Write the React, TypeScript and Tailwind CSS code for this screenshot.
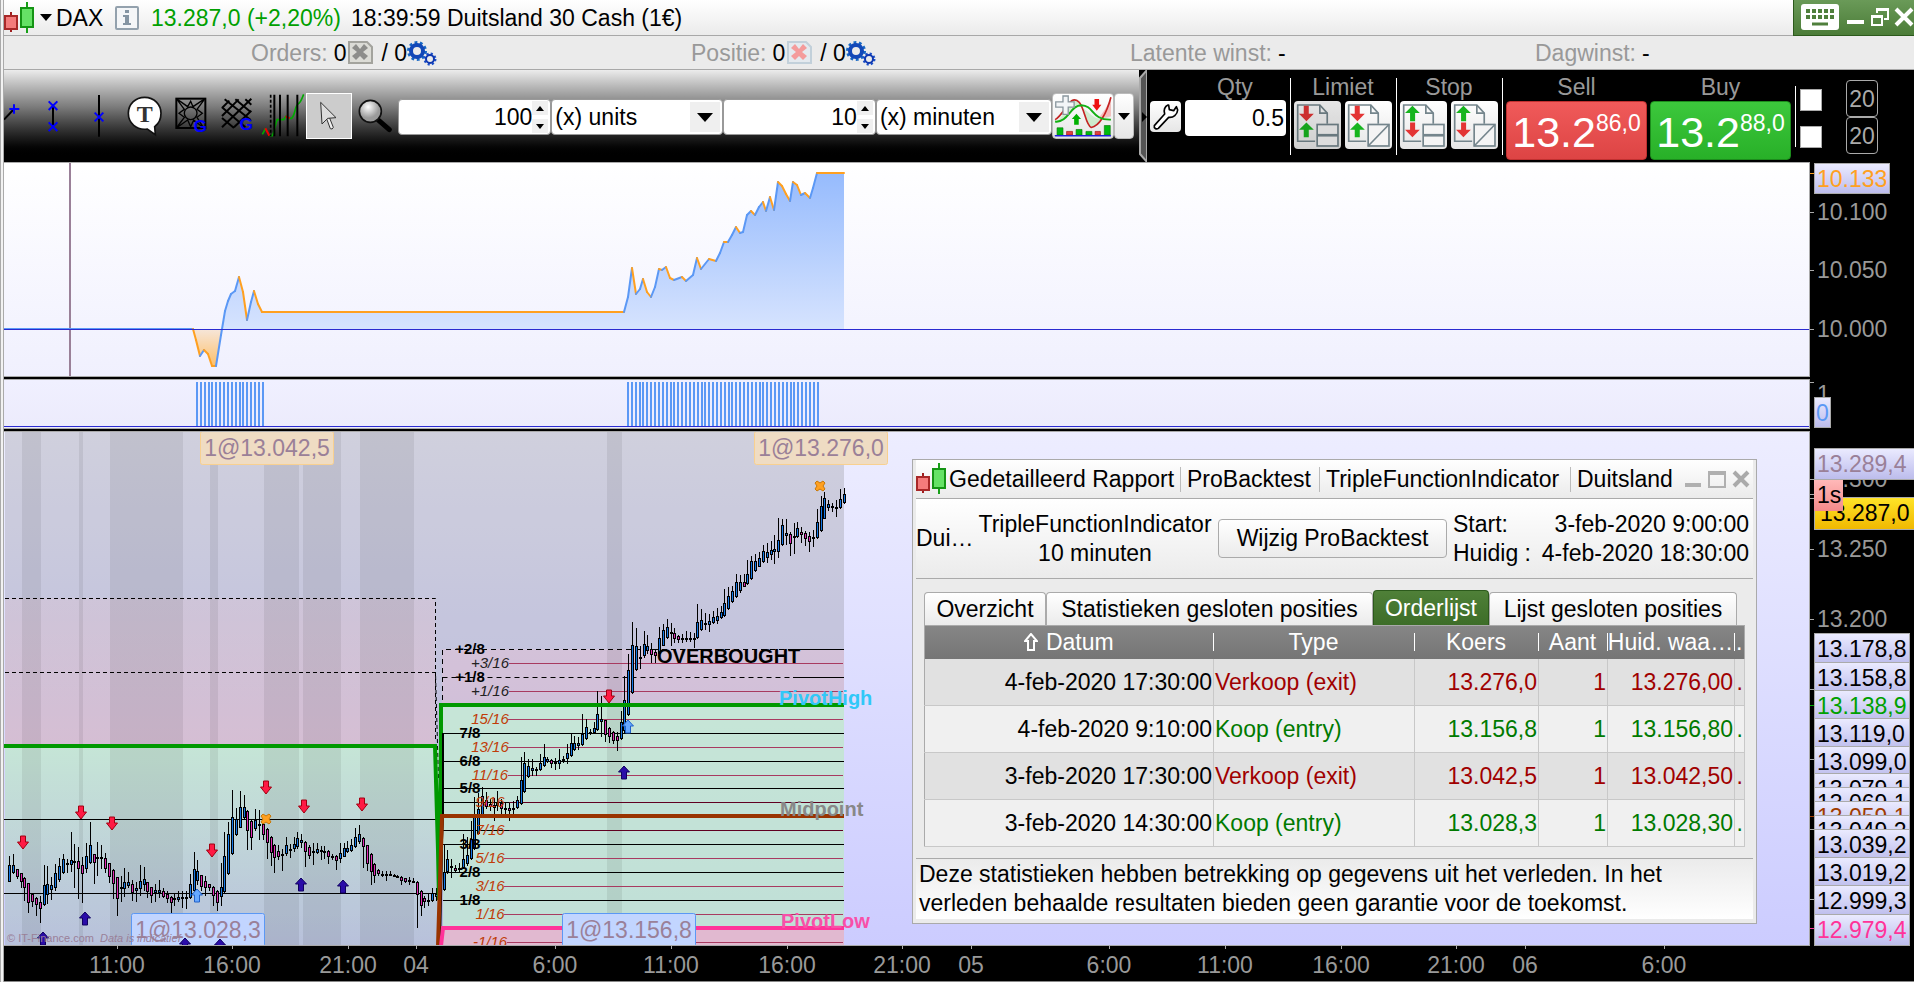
import type { ReactNode } from 'react';

/* ---------- data ---------- */

const EQUITY: [number, number][] = [
  [193, 329], [196, 340], [200, 356], [204, 350], [208, 354], [212, 366], [216, 366], [221, 335],
  [225, 311], [228, 301], [231, 294], [235, 291], [239, 277], [243, 292], [247, 320], [251, 302],
  [254, 291], [258, 304], [262, 312], [624, 312], [628, 297], [632, 268], [636, 294], [640, 289],
  [643, 279], [647, 292], [651, 297], [655, 287], [659, 269], [662, 270], [666, 267], [670, 278],
  [674, 280], [682, 277], [686, 281], [693, 275], [697, 258], [701, 269], [709, 259], [716, 261],
  [720, 253], [724, 242], [728, 242], [732, 235], [736, 227], [740, 233], [743, 232], [747, 215],
  [751, 211], [755, 215], [759, 207], [763, 202], [766, 211], [770, 197], [774, 210], [778, 182],
  [782, 186], [786, 194], [790, 201], [793, 182], [797, 185], [801, 195], [805, 193], [810, 198],
  [813, 188], [817, 173], [844, 173],
];

// high, body top, body bottom, low, rising
const CANDLES: number[][] = [
  [1210, 1235, 1285, 1285, 1], [1205, 1237, 1259, 1262, 1], [1247, 1247, 1270, 1275, 0], [1259, 1259, 1283, 1300, 0],
  [1270, 1273, 1302, 1337, 0], [1287, 1288, 1343, 1373, 0], [1316, 1317, 1340, 1355, 0], [1328, 1329, 1350, 1382, 0],
  [1325, 1341, 1360, 1400, 0], [1237, 1293, 1350, 1352, 1], [1238, 1290, 1322, 1347, 1], [1270, 1293, 1308, 1335, 1],
  [1234, 1259, 1300, 1310, 1], [1216, 1239, 1279, 1283, 1], [1204, 1219, 1259, 1261, 1], [1218, 1231, 1237, 1259, 1],
  [1141, 1221, 1236, 1257, 1], [1175, 1224, 1228, 1300, 0], [1185, 1225, 1246, 1333, 0], [1213, 1237, 1262, 1343, 0],
  [1173, 1210, 1248, 1258, 1], [1115, 1180, 1230, 1233, 1], [1204, 1204, 1230, 1290, 0], [1170, 1214, 1219, 1268, 1],
  [1178, 1214, 1218, 1246, 0], [1202, 1216, 1246, 1258, 0], [1230, 1231, 1270, 1287, 0], [1247, 1249, 1290, 1333, 0],
  [1270, 1271, 1333, 1382, 0], [1268, 1299, 1303, 1341, 0], [1244, 1285, 1303, 1328, 1], [1257, 1284, 1296, 1302, 1],
  [1279, 1289, 1314, 1338, 0], [1285, 1302, 1310, 1340, 1], [1236, 1282, 1303, 1324, 1], [1241, 1275, 1293, 1309, 1],
  [1284, 1285, 1312, 1330, 0], [1298, 1299, 1325, 1343, 0], [1290, 1308, 1314, 1342, 1], [1279, 1306, 1316, 1330, 1],
  [1300, 1310, 1328, 1330, 0], [1311, 1318, 1332, 1344, 0], [1324, 1326, 1344, 1371, 0], [1316, 1330, 1334, 1353, 0],
  [1310, 1326, 1334, 1340, 1], [1311, 1328, 1332, 1358, 0], [1309, 1328, 1331, 1360, 0], [1262, 1291, 1330, 1332, 1],
  [1199, 1247, 1310, 1312, 1], [1221, 1254, 1280, 1292, 1], [1265, 1265, 1298, 1310, 0], [1268, 1281, 1300, 1325, 0],
  [1290, 1291, 1302, 1310, 0], [1295, 1297, 1325, 1352, 0], [1308, 1311, 1344, 1366, 0], [1230, 1299, 1328, 1352, 1],
  [1142, 1211, 1312, 1314, 1], [1115, 1147, 1262, 1264, 1], [1023, 1100, 1205, 1207, 1], [1075, 1105, 1150, 1153, 1],
  [1025, 1070, 1130, 1132, 1], [1037, 1070, 1101, 1105, 1], [1080, 1082, 1140, 1192, 0], [1105, 1112, 1158, 1192, 0],
  [1077, 1107, 1133, 1138, 1], [1080, 1118, 1122, 1165, 0], [1112, 1120, 1150, 1165, 0], [1130, 1134, 1174, 1218, 0],
  [1153, 1155, 1203, 1240, 0], [1177, 1178, 1216, 1258, 0], [1180, 1195, 1213, 1222, 0], [1190, 1205, 1209, 1252, 1],
  [1157, 1178, 1205, 1210, 1], [1176, 1190, 1193, 1215, 0], [1155, 1177, 1191, 1198, 1], [1142, 1160, 1185, 1190, 1],
  [1148, 1165, 1172, 1187, 1], [1168, 1170, 1200, 1241, 0], [1180, 1185, 1210, 1220, 0], [1173, 1195, 1203, 1235, 1],
  [1173, 1190, 1201, 1204, 1], [1182, 1193, 1197, 1222, 0], [1182, 1195, 1203, 1220, 0], [1192, 1195, 1213, 1232, 0],
  [1205, 1211, 1215, 1223, 0], [1208, 1210, 1225, 1250, 0], [1173, 1202, 1219, 1230, 1], [1172, 1187, 1212, 1214, 1],
  [1168, 1187, 1200, 1203, 1], [1163, 1180, 1197, 1200, 1], [1132, 1157, 1185, 1188, 1], [1122, 1147, 1171, 1175, 1],
  [1157, 1160, 1185, 1243, 0], [1178, 1180, 1233, 1252, 0], [1203, 1205, 1255, 1294, 0], [1230, 1232, 1266, 1286, 0],
  [1247, 1250, 1262, 1268, 0], [1252, 1260, 1264, 1270, 0], [1253, 1260, 1265, 1282, 0], [1253, 1260, 1264, 1268, 1],
  [1260, 1263, 1268, 1270, 0], [1263, 1266, 1270, 1273, 0], [1268, 1270, 1280, 1293, 0], [1272, 1274, 1285, 1288, 0],
  [1270, 1278, 1285, 1292, 0], [1273, 1280, 1284, 1288, 1], [1281, 1283, 1322, 1416, 0], [1307, 1309, 1352, 1380, 0],
  [1323, 1329, 1342, 1358, 0], [1316, 1334, 1338, 1353, 1], [1301, 1316, 1338, 1340, 1], [1301, 1318, 1327, 1338, 1],
  [1280, 1290, 1320, 1345, 1], [1180, 1257, 1308, 1310, 1], [1193, 1219, 1257, 1260, 1], [1220, 1240, 1245, 1272, 0],
  [1235, 1243, 1252, 1258, 0], [1230, 1245, 1248, 1256, 0], [1148, 1218, 1243, 1248, 1], [1155, 1207, 1232, 1238, 1],
  [1110, 1162, 1219, 1222, 1], [1042, 1100, 1190, 1192, 1], [1030, 1078, 1147, 1150, 1], [1015, 1040, 1095, 1100, 1],
  [1028, 1050, 1070, 1078, 0], [1048, 1063, 1070, 1082, 0], [1045, 1066, 1075, 1110, 0], [1025, 1060, 1068, 1083, 1],
  [1048, 1060, 1077, 1100, 0], [1060, 1074, 1080, 1092, 0], [1060, 1073, 1081, 1110, 0], [1055, 1075, 1079, 1092, 0],
  [1040, 1052, 1075, 1077, 1], [930, 995, 1063, 1065, 1], [915, 947, 1029, 1030, 1], [935, 955, 987, 990, 1],
  [935, 960, 968, 982, 1], [957, 963, 968, 982, 0], [920, 947, 967, 970, 1], [893, 930, 955, 958, 1],
  [930, 934, 943, 947, 1], [935, 938, 950, 960, 0], [933, 943, 950, 966, 0], [907, 937, 948, 962, 1],
  [925, 934, 940, 945, 1], [892, 918, 936, 950, 1], [865, 890, 927, 928, 1], [868, 888, 908, 912, 1],
  [873, 890, 898, 908, 1], [808, 863, 896, 898, 1], [822, 845, 877, 880, 1], [850, 857, 861, 866, 0],
  [830, 846, 860, 865, 1], [742, 808, 853, 855, 1], [757, 822, 830, 872, 1], [824, 825, 867, 885, 0],
  [845, 848, 872, 890, 0], [855, 857, 883, 892, 0], [858, 870, 884, 913, 0], [798, 830, 877, 880, 1],
  [700, 768, 855, 865, 1], [635, 683, 810, 812, 1], [545, 612, 747, 750, 1], [562, 615, 681, 685, 1],
  [613, 645, 650, 678, 1], [570, 607, 642, 648, 1], [582, 615, 627, 635, 1], [606, 622, 640, 662, 0],
  [622, 630, 642, 662, 0], [560, 592, 635, 637, 1], [550, 568, 613, 615, 1], [537, 560, 592, 594, 1],
  [548, 574, 580, 615, 0], [563, 577, 593, 605, 0], [582, 584, 597, 605, 0], [580, 591, 595, 605, 0],
  [570, 590, 594, 602, 0], [573, 590, 594, 602, 0], [577, 590, 594, 618, 0], [494, 545, 592, 594, 1],
  [508, 540, 569, 571, 1], [520, 548, 554, 567, 1], [522, 543, 553, 575, 1], [515, 531, 548, 552, 1],
  [507, 527, 543, 550, 1], [500, 517, 535, 538, 1], [453, 491, 527, 530, 1], [445, 473, 509, 512, 1],
  [442, 458, 489, 491, 1], [410, 432, 474, 476, 1], [412, 433, 457, 462, 1], [408, 433, 445, 447, 0],
  [370, 408, 438, 441, 1], [358, 373, 424, 426, 1], [352, 373, 400, 402, 1], [348, 364, 388, 390, 1],
  [327, 345, 375, 377, 1], [320, 347, 363, 377, 1], [315, 342, 354, 368, 1], [297, 338, 348, 382, 1],
  [250, 312, 346, 365, 1], [252, 270, 328, 330, 1], [253, 293, 300, 327, 1], [290, 296, 323, 357, 0],
  [265, 300, 308, 352, 1], [262, 277, 305, 308, 1], [275, 290, 297, 322, 0], [288, 293, 310, 330, 0],
  [290, 302, 317, 347, 0], [283, 305, 309, 332, 0], [225, 262, 308, 310, 1], [188, 217, 286, 290, 1],
  [177, 194, 252, 254, 1], [200, 210, 223, 230, 1], [208, 217, 223, 232, 0], [200, 218, 222, 248, 0],
  [168, 196, 222, 224, 1], [165, 183, 208, 210, 1],
];

const toX = (i: number) => Math.round(9 + i * 3.846) + 0.5;
const toY = (v: number) => 430 + Math.round(v * 0.352);

const BANDS = [[22, 19], [79, 4], [110, 73], [210, 8], [264, 35], [303, 38], [360, 54], [607, 15]];
const EIGHTHS: [string, number][] = [
  ['+2/8', 649], ['+1/8', 677], ['7/8', 733], ['6/8', 761], ['5/8', 788], ['3/8', 844], ['2/8', 872], ['1/8', 900],
];
const SIXTEENTHS: [string, number, number][] = [
  ['+3/16', 663, 509], ['+1/16', 691, 509], ['15/16', 719, 508], ['13/16', 747, 508], ['11/16', 775, 508], ['9/16', 802, 504],
  ['7/16', 830, 504], ['5/16', 858, 504], ['3/16', 886, 504], ['1/16', 914, 504], ['-1/16', 942, 507],
];
const SELL_MARKS = [[23, 836], [81, 806], [112, 817], [212, 844], [266, 781], [304, 800], [362, 798], [609, 690]];
const BUY_MARKS = [[43, 932], [85, 912], [185, 938], [220, 939], [301, 878], [343, 880], [624, 766]];
const TIMES: [string, number][] = [
  ['11:00', 117], ['16:00', 232], ['21:00', 348], ['04', 416], ['6:00', 555], ['11:00', 671], ['16:00', 787], ['21:00', 902],
  ['05', 971], ['6:00', 1109], ['11:00', 1225], ['16:00', 1341], ['21:00', 1456], ['06', 1525], ['6:00', 1664],
];
const LEVELS: [string, number, string][] = [
  ['13.178,8', 633, '#000'], ['13.158,8', 662, '#000'], ['13.138,9', 690, '#00a000'], ['13.119,0', 718, '#000'],
  ['13.099,0', 746, '#000'], ['13.079,1', 773, '#000'], ['13.069,1', 787, '#000'], ['13.059,1', 801, '#a03c00'],
  ['13.049,2', 815, '#000'], ['13.039,2', 829, '#000'], ['13.019,2', 857, '#000'], ['12.999,3', 885, '#000'],
  ['12.979,4', 914, '#ff3399'],
];

const ORDERS = [
  { date: '4-feb-2020 17:30:00', type: 'Verkoop (exit)', price: '13.276,0', qty: 1, value: '13.276,00', buy: false },
  { date: '4-feb-2020 9:10:00', type: 'Koop (entry)', price: '13.156,8', qty: 1, value: '13.156,80', buy: true },
  { date: '3-feb-2020 17:30:00', type: 'Verkoop (exit)', price: '13.042,5', qty: 1, value: '13.042,50', buy: false },
  { date: '3-feb-2020 14:30:00', type: 'Koop (entry)', price: '13.028,3', qty: 1, value: '13.028,30', buy: true },
];

/* ---------- icons ---------- */

const CandleLogo = () => (
  <svg width="30" height="32" viewBox="0 0 30 32" className="shrink-0">
    <path d="M7 10v20" stroke="#a02020" strokeWidth="2" />
    <rect x="1" y="14" width="12" height="13" fill="#f47c7c" stroke="#a82828" strokeWidth="2" />
    <path d="M23 0v31" stroke="#18a018" strokeWidth="2" />
    <rect x="17" y="6" width="12" height="19" fill="#66e266" stroke="#159515" strokeWidth="2" />
  </svg>
);

const Caret = ({ w = 16, h = 9 }: { w?: number; h?: number }) => (
  <svg width={w} height={h} viewBox="0 0 16 9" preserveAspectRatio="none">
    <path d="M0 0h16l-8 9z" fill="#000" />
  </svg>
);

const InfoIcon = () => (
  <svg width="24" height="24" viewBox="0 0 24 24" className="shrink-0">
    <rect x="1" y="1" width="22" height="22" rx="1" fill="#f4f6f8" stroke="#93a1ad" strokeWidth="2" />
    <path d="M10 4h4v3h-4zM8 9h6v8h2v2H8v-2h2v-6H8z" fill="#8595a3" />
  </svg>
);

const CloseSheet = ({ muted }: { muted?: boolean }) => (
  <svg width="25" height="23" viewBox="0 0 25 23">
    <path d="M1 1h18l5 5v16H1z" fill={muted ? '#dcdcd6' : '#e4e9ee'} stroke={muted ? '#a3a39d' : '#c2d0da'} strokeWidth="2" />
    <path d="M4 7l4-4 4 5 4-5 4 4-5 4 5 4-4 4-4-4-4 4-4-4 5-4z" fill={muted ? '#8d8d8a' : '#f49b9b'} />
  </svg>
);

const Gears = () => (
  <svg width="30" height="26" viewBox="0 0 30 26" fill="none">
    <circle cx="10" cy="11" r="8" stroke="#1868c4" strokeWidth="4" strokeDasharray="2.600 2.427" />
    <circle cx="10" cy="11" r="6" stroke="#1248b8" strokeWidth="4" />
    <circle cx="23" cy="19" r="5" stroke="#1a50c8" strokeWidth="3" strokeDasharray="2 1.927" />
    <circle cx="23" cy="19" r="4" stroke="#1038b0" strokeWidth="2" />
  </svg>
);

const LineTool = () => (
  <svg width="16" height="46" viewBox="12 27 48 138">
    <path d="M12 107L42 75" stroke="#000" strokeWidth="6" />
    <path d="M42 61v28M28 75h30" stroke="#00f" strokeWidth="6" />
  </svg>
);

const SegmentTool = () => (
  <svg width="12" height="46" viewBox="141 27 36 138">
    <path d="M159 66v62" stroke="#000" strokeWidth="6" />
    <path d="M146 52l26 26M172 52l-26 26M146 115l26 26M172 115l-26 26" stroke="#00f" strokeWidth="6" />
  </svg>
);

const VerticalTool = () => (
  <svg width="12" height="46" viewBox="279 27 36 138">
    <path d="M297 33v125" stroke="#000" strokeWidth="6" />
    <path d="M284 86l26 26M310 86l-26 26" stroke="#00f" strokeWidth="6" />
  </svg>
);

const TextTool = () => (
  <svg width="38" height="42" viewBox="376 38 114 126">
    <path d="M432 45c29 0 49 22 49 48 0 18-8 32-19 40l2 24-24-17c-33 5-57-18-57-47 0-27 21-48 49-48z" fill="#fff" stroke="#111" strokeWidth="5" />
    <text x="432" y="118" textAnchor="middle" fontFamily="Liberation Serif" fontWeight="bold" fontSize="72" fill="#333">T</text>
  </svg>
);

const GannFanTool = () => (
  <svg width="34" height="40" viewBox="520 44 102 120" fill="none">
    <rect x="527" y="52" width="87" height="88" stroke="#000" strokeWidth="6" />
    <circle cx="570" cy="96" r="19" stroke="#000" strokeWidth="4" />
    <path d="M527 52l24 32-16 12 16 12-24 32 34-24 9 20 9-20 30 24-20-32 16-12-16-12 24-32-36 24-7-16-9 16z" stroke="#000" strokeWidth="4" />
    <text x="599" y="151" textAnchor="middle" fontWeight="bold" fontSize="52" fill="#00f">G</text>
  </svg>
);

const GannGridTool = () => (
  <svg width="34" height="40" viewBox="658 44 102 120" fill="none">
    <path d="M672 54l78 62M664 78l70 60M664 110l36 30M704 54l46 38M734 54l18 16M664 138l88-86M664 104l50-50M664 80l22-22M700 138l52-50" stroke="#000" strokeWidth="6" />
    <text x="737" y="146" textAnchor="middle" fontWeight="bold" fontSize="52" fill="#00f">G</text>
  </svg>
);

const CyclesTool = () => (
  <svg width="44" height="46" viewBox="780 28 132 138" fill="none">
    <path d="M784 152l10-18M806 156h8c6-10 8-30 14-48h20l8-12M864 104h8c12-12 8-34 20-44 8-4 10-14 16-28" stroke="#0a0" strokeWidth="5" />
    <path d="M793 134l12 22M854 98l12 6" stroke="#e00" strokeWidth="6" />
    <path d="M809 33v125" stroke="#000" strokeWidth="5" strokeDasharray="9 6" />
    <path d="M820 33v125M837 33v125M860 33v125M889 33v125" stroke="#000" strokeWidth="6" />
  </svg>
);

const PointerTool = () => (
  <svg width="24" height="32" viewBox="954 50 66 96">
    <path d="M979 104l12 32q6 4 9-4l-12-30z" fill="#eee" stroke="#333" strokeWidth="3" />
    <path d="M962 57l46 46-25 2-17 17z" fill="#ddd" stroke="#333" strokeWidth="3" />
  </svg>
);

const Magnifier = () => (
  <svg width="34" height="36" viewBox="1068 46 102 106">
    <defs>
      <radialGradient id="lens" cx=".4" cy=".3">
        <stop offset="0" stopColor="#fff" />
        <stop offset="1" stopColor="#9a9a9a" />
      </radialGradient>
    </defs>
    <path d="M1130 112l32 28" stroke="#000" strokeWidth="15" strokeLinecap="round" />
    <circle cx="1105" cy="85" r="33" fill="url(#lens)" stroke="#111" strokeWidth="5" />
  </svg>
);

const IndicatorIcon = () => (
  <svg width="60" height="44" viewBox="42 72 178 134" fill="none">
    <path d="M46 158c40-20 44-96 74-62 16 20 20 70 36 76 24 4 46-40 60-90v58c-30 12-40 10-60-4-30-30-50-40-72-4-12 18-24 30-38 26z" fill="#bfe8bf" opacity=".7" />
    <path d="M176 146c16-14 30-38 40-64v58z" fill="#f4bcbc" />
    <path d="M46 150c30-16 46-84 74-52 16 20 20 70 36 76 24-4 46-40 60-92" stroke="#c42222" strokeWidth="5" />
    <path d="M46 156c40 4 46-50 80-50 40 2 30 46 90 44" stroke="#12b012" strokeWidth="6" />
    <path d="M70 78h16v18h18v16H86v22H70v-22H48V96h22z" fill="#f3f5f7" stroke="#8a979e" strokeWidth="4" />
    <path d="M166 87h14v18h7l-14 18-14-18h7z" fill="#ee1111" />
    <path d="M104 166h14v-18h7l-14-16-14 16h7z" fill="#00b000" />
    <path d="M52 175h18v22H52zM110 180h18v17h-18zM140 186h18v11h-18zM196 168h18v29h-18z" fill="#00bb10" stroke="#0a7a0a" strokeWidth="2" />
    <path d="M81 186h18v11H81zM168 186h16v11h-16z" fill="#e04040" stroke="#a01010" strokeWidth="2" />
    <path d="M45 199h171" stroke="#2222dd" strokeWidth="5" />
  </svg>
);

const Wrench = () => (
  <svg width="30" height="30" viewBox="335 92 90 90">
    <path d="M386 101c-10 4-14 16-10 27l-31 35c-2 8 6 12 12 8l31-33c14 2 26-8 27-22l-4-10-8 12-13-3-2-14z" fill="#fff" stroke="#000" strokeWidth="5" strokeLinejoin="round" />
  </svg>
);

const OrderIcon = ({ stop, diagonal }: { stop?: boolean; diagonal?: boolean }) => (
  <svg width="47" height="47" viewBox="763 95 140 140" fill="none" className="shrink-0">
    <path d="M826 212h-52v-108h66l22 24v32" stroke="#74858c" strokeWidth="5" />
    <path d="M840 104v24h22" stroke="#74858c" strokeWidth="5" />
    <path d="M792 106h15v24h15l-22 22-22-22h14z" fill={stop ? '#17b51f' : '#e33434'} transform={stop ? 'rotate(180 800 129)' : undefined} />
    <path d="M792 200h15v-22h15l-22-22-22 22h14z" fill={stop ? '#e33434' : '#17b51f'} transform={stop ? 'rotate(180 800 178)' : undefined} />
    <rect x="832" y="162" width="62" height="64" fill="#f4f4f4" stroke="#74858c" strokeWidth="5" />
    {diagonal ? (
      <path d="M832 226l62-64" stroke="#74858c" strokeWidth="5" />
    ) : (
      <path d="M832 194h62" stroke="#74858c" strokeWidth="8" />
    )}
  </svg>
);

/* ---------- header ---------- */

const TitleBar = () => (
  <header className="flex h-9 items-center border-b border-[#a8a8a8] bg-linear-to-b from-white to-[#ebebeb]">
    <CandleLogo />
    <button aria-label="Instrument" className="ml-1 flex h-8 w-4 items-center justify-center">
      <Caret w={12} h={7} />
    </button>
    <h1 className="ml-[2px] w-[59px]">DAX</h1>
    <button aria-label="Info" className="w-[36px]"><InfoIcon /></button>
    <span className="w-[200px] whitespace-nowrap text-[#00a000]">13.287,0 (+2,20%)</span>
    <span className="w-[96px]">18:39:59</span>
    <span className="flex-1 whitespace-nowrap">Duitsland 30 Cash (1€)</span>
    <div className="flex h-9 items-center border-b border-l border-[#2c5a1c] bg-linear-to-b from-[#6a9a58] to-[#4b7c38] pl-[6px]">
      <button aria-label="Toetsenbord">
        <svg width="40" height="28" viewBox="0 0 40 28">
          <rect x="1" y="1" width="38" height="26" rx="3" fill="#fff" />
          <path d="M6 8h28M6 14h28" stroke="#4f7f3c" strokeWidth="4" strokeDasharray="4 2" />
          <path d="M12 21h16" stroke="#4f7f3c" strokeWidth="3" />
        </svg>
      </button>
      <button aria-label="Minimaliseren" className="ml-[6px]">
        <svg width="20" height="24"><path d="M1 17h17" stroke="#fff" strokeWidth="4" /></svg>
      </button>
      <button aria-label="Herstellen" className="ml-1">
        <svg width="20" height="24" fill="none" stroke="#fff" strokeWidth="2">
          <path d="M7 8V4h11v10h-4M7 5h11" />
          <path d="M2 11h10v9H2zM2 12h10" />
        </svg>
      </button>
      <button aria-label="Sluiten" className="ml-1">
        <svg width="20" height="24" stroke="#fff" strokeWidth="4"><path d="M2 4l16 16M18 4L2 20" /></svg>
      </button>
    </div>
  </header>
);

const StatusBar = () => (
  <div className="grid h-[34px] grid-cols-[440fr_439fr_405fr_379fr] items-center whitespace-nowrap border-b border-[#a8a8a8] bg-[#ebebeb] pl-[247px]">
    <div className="flex items-center">
      <span className="mr-[6px] text-[#999]">Orders:</span>0
      <button aria-label="Orders annuleren" className="ml-[2px] mr-2"><CloseSheet muted /></button>/ 0
      <button aria-label="Automatische orders"><Gears /></button>
    </div>
    <div className="flex items-center">
      <span className="mr-[6px] text-[#999]">Positie:</span>0
      <button aria-label="Positie sluiten" className="ml-[2px] mr-2"><CloseSheet /></button>/ 0
      <button aria-label="Automatische posities"><Gears /></button>
    </div>
    <div><span className="mr-[6px] text-[#999]">Latente winst:</span>-</div>
    <div><span className="mr-[6px] text-[#999]">Dagwinst:</span>-</div>
  </div>
);

const Spin = ({ label, value, className }: { label: string; value: string; className: string }) => (
  <div className={`flex h-9 items-center rounded-sm border border-[#999] bg-white ${className}`}>
    <input aria-label={label} defaultValue={value} className="h-full w-0 flex-1 bg-transparent text-right outline-none" />
    <div className="mr-[2px] flex w-4 flex-col gap-1">
      <button aria-label={`${label} hoger`} className="flex h-[14px] items-center justify-center bg-[#f0f0f0]">
        <svg width="8" height="5"><path d="M0 5h8L4 0z" /></svg>
      </button>
      <button aria-label={`${label} lager`} className="flex h-[14px] items-center justify-center bg-[#f0f0f0]">
        <svg width="8" height="5"><path d="M0 0h8L4 5z" /></svg>
      </button>
    </div>
  </div>
);

const Choice = ({ label, value, className }: { label: string; value: string; className: string }) => (
  <div className={`grid h-9 items-center rounded-sm border border-[#999] bg-white ${className}`}>
    <select aria-label={label} defaultValue={value} className="col-start-1 row-start-1 h-full w-full appearance-none bg-transparent pl-[3px] outline-none">
      <option>{value}</option>
    </select>
    <span className="pointer-events-none col-start-1 row-start-1 mr-[2px] flex h-[30px] w-[30px] items-center justify-center justify-self-end bg-[#efefef]">
      <Caret />
    </span>
  </div>
);

const Tool = ({ label, active, children }: { label: string; active?: boolean; children: ReactNode }) => (
  <button
    aria-label={label}
    className={`flex h-[46px] w-[46px] shrink-0 items-center justify-center ${active ? 'border border-white bg-[#cccccc]' : ''}`}
  >
    {children}
  </button>
);

const iconButton = 'flex items-center justify-center rounded-sm bg-linear-to-b from-white to-[#e6e6e6]';

const Quote = ({ label, big, small, className }: { label: string; big: string; small: string; className: string }) => (
  <div className="flex w-[141px] flex-col items-center">
    <span className="h-[27px] text-[#999]">{label}</span>
    <button aria-label={label} className={`flex h-[59px] w-full justify-center rounded-sm border bg-linear-to-b text-white ${className}`}>
      <span className="text-[43px] leading-[60px]">{big}</span>
      <span className="text-[23px] leading-[42px]">{small}</span>
    </button>
  </div>
);

const Toolbar = () => (
  <div className="flex h-[92px] bg-black">
    <div className="flex flex-1 items-start bg-linear-to-b from-[#ececec] via-[#7c7c7c] via-40% to-black to-95% pt-[23px]">
      <div className="w-[26px] shrink-0"><LineTool /></div>
      <Tool label="Segment"><SegmentTool /></Tool>
      <Tool label="Verticale lijn"><VerticalTool /></Tool>
      <Tool label="Tekst"><TextTool /></Tool>
      <Tool label="Gann-waaier"><GannFanTool /></Tool>
      <Tool label="Gann-raster"><GannGridTool /></Tool>
      <Tool label="Cycli"><CyclesTool /></Tool>
      <Tool label="Aanwijzer" active><PointerTool /></Tool>
      <Tool label="Zoom"><Magnifier /></Tool>
      <div className="flex flex-1 pt-[6px]">
        <Spin label="Aantal units" value="100" className="flex-[153]" />
        <Choice label="Eenheid" value="(x) units" className="flex-[171]" />
        <Spin label="Aantal minuten" value="10" className="flex-[153]" />
        <Choice label="Tijdsinterval" value="(x) minuten" className="flex-[176]" />
      </div>
      <button aria-label="Indicatoren" className={`${iconButton} h-[46px] w-[62px] border border-[#bbb]`}><IndicatorIcon /></button>
      <button aria-label="Meer indicatoren" className={`${iconButton} mr-[5px] h-[46px] w-5 border border-[#bbb]`}><Caret w={12} h={7} /></button>
    </div>
    <svg width="8" height="92" className="shrink-0">
      <path d="M8 0L1 8v76l7 8z" fill="#555" stroke="#aaa" strokeWidth="2" />
      <path d="M3 42l5 5-5 5z" fill="#000" />
    </svg>
    <div className="flex items-start pl-[3px] pt-1">
      <button aria-label="Instellingen" className={`${iconButton} mt-[27px] h-[31px] w-[31px]`}><Wrench /></button>
      <label className="ml-1 flex w-[101px] flex-col">
        <span className="h-[26px] pl-8 text-[#999]">Qty</span>
        <input defaultValue="0.5" className="h-9 rounded-sm bg-white px-[2px] text-right outline-none" />
      </label>
      <div className="ml-1 mr-[3px] mt-1 h-[77px] w-px bg-white" />
      <div className="flex flex-col items-center">
        <span className="h-[27px] text-[#999]">Limiet</span>
        <div className="flex gap-1">
          <button aria-label="Limiet" className={`${iconButton} h-12 w-[47px] brightness-90`}><OrderIcon /></button>
          <button aria-label="Limiet vrij" className={`${iconButton} h-12 w-[47px]`}><OrderIcon diagonal /></button>
        </div>
      </div>
      <div className="ml-1 mr-[3px] mt-1 h-[77px] w-px bg-white" />
      <div className="flex flex-col items-center">
        <span className="h-[27px] text-[#999]">Stop</span>
        <div className="flex gap-1">
          <button aria-label="Stop" className={`${iconButton} h-12 w-[47px]`}><OrderIcon stop /></button>
          <button aria-label="Stop vrij" className={`${iconButton} h-12 w-[47px]`}><OrderIcon stop diagonal /></button>
        </div>
      </div>
      <div className="ml-1 mr-[3px] mt-1 h-[77px] w-px bg-white" />
      <Quote label="Sell" big="13.2" small="86,0" className="border-[#c03030] from-[#f05a5a] to-[#dd4444]" />
      <div className="w-[3px]" />
      <Quote label="Buy" big="13.2" small="88,0" className="border-[#1c8c1c] from-[#3cc83c] to-[#28b028]" />
      <div className="ml-1 mr-1 mt-3 h-[61px] w-px bg-white" />
      <div className="flex flex-col gap-[15px] pt-[15px]">
        <input type="checkbox" aria-label="Stop meenemen" className="h-[22px] w-[22px] appearance-none border border-[#aaa] bg-white" />
        <input type="checkbox" aria-label="Limiet meenemen" className="h-[22px] w-[22px] appearance-none border border-[#aaa] bg-white" />
      </div>
      <div className="ml-6 mr-9 flex flex-col pt-[6px] text-[#aaa]">
        <button className="h-[37px] w-8 rounded-sm border border-[#aaa]">20</button>
        <button className="h-[37px] w-8 rounded-sm border border-[#aaa]">20</button>
      </div>
    </div>
  </div>
);

/* ---------- charts ---------- */

// Chart geometry is kept in screen units; each pane shifts it to its own origin.
const Pane = ({ x, y, className, children }: { x: number; y: number; className?: string; children: ReactNode }) => (
  <svg className={`block h-full w-full ${className ?? ''}`}>
    <g transform={`translate(${-x} ${-y})`}>{children}</g>
  </svg>
);

const Row = ({ className, plot, axis }: { className: string; plot: ReactNode; axis: ReactNode }) => (
  <section className={`flex bg-black ${className}`}>
    <div className="relative min-w-0 flex-1">{plot}</div>
    <div className="w-[104px] shrink-0">{axis}</div>
  </section>
);

const frame = 'h-full border-y border-r border-[#aaa]';

const Tick = ({ y, text }: { y: number; text?: string }) => (
  <>
    <path d={`M1810 ${y}.5h4`} stroke="#aaa" />
    {text && <text x="1817" y={y + 8} fill="#999">{text}</text>}
  </>
);

const PriceBox = ({ y, w, h = 31, text, color }: { y: number; w: number; h?: number; text: string; color: string }) => (
  <>
    <rect x="1814.5" y={y + 0.5} width={w} height={h} fill="url(#box)" stroke="#aaa" />
    <text x={w < 20 ? 1816 : 1817} y={y + 24} fill={color}>{text}</text>
  </>
);

const BoxGradient = () => (
  <defs>
    <linearGradient id="box" x2="0" y2="1">
      <stop stopColor="#ebebff" />
      <stop offset="1" stopColor="#bcbcec" />
    </linearGradient>
  </defs>
);

const EquityPlot = () => {
  const gain = EQUITY.slice(8).map((p) => p.join(',')).join(' ');
  const loss = EQUITY.slice(0, 8).map((p) => p.join(',')).join(' ');
  return (
    <div className={`${frame} bg-linear-to-b from-white to-[#f0f0fe]`}>
      <Pane x={4} y={163}>
        <defs>
          <linearGradient id="gain" gradientUnits="userSpaceOnUse" x1="0" y1="173" x2="0" y2="329">
            <stop stopColor="#96bbfd" />
            <stop offset="1" stopColor="#d6e3fe" />
          </linearGradient>
          <linearGradient id="loss" x2="0" y2="1">
            <stop stopColor="#f6e6da" />
            <stop offset="1" stopColor="#fdc06a" />
          </linearGradient>
        </defs>
        <path d="M70 163v214" stroke="#9a8098" strokeWidth="2" />
        <polygon points={`222,329 ${gain} 844,329`} fill="url(#gain)" />
        <polygon points={`193,329 ${loss} 222,329`} fill="url(#loss)" />
        <path d="M4 328.5h190" stroke="#5b98f5" />
        {EQUITY.slice(1).map(([x, y], i) => (
          <path
            key={x}
            d={`M${EQUITY[i][0]} ${EQUITY[i][1]}L${x} ${y}`}
            stroke={y < EQUITY[i][1] ? '#5b98f5' : '#ffa020'}
            strokeWidth="2"
            strokeLinecap="round"
          />
        ))}
        <path d="M4 329.5h4000" stroke="#2a2ad0" />
      </Pane>
    </div>
  );
};

const PositionPlot = () => {
  const bars = [
    ...Array.from({ length: 18 }, (_, i) => Math.round(196 + i * 3.87)),
    ...Array.from({ length: 50 }, (_, i) => Math.round(627 + i * 3.87)),
  ];
  return (
    <div className={`${frame} bg-linear-to-b from-[#f0f0ff] to-[#ecebfc]`}>
      <Pane x={4} y={380}>
        {bars.map((x) => <rect key={x} x={x} y="382" width="2" height="44" fill="#5b98f5" />)}
        <path d="M4 426.5h4000" stroke="#2a2ad0" />
      </Pane>
    </div>
  );
};

const PriceTag = ({ x, y, buy, text }: { x: number; y: number; buy?: boolean; text: string }) => (
  <>
    <rect x={x + 0.5} y={y + 0.5} width="133" height="33" rx="2" fill={buy ? '#c2d5ff' : '#efdcc3'} stroke={buy ? '#5b98f5' : '#f8d090'} />
    <text x={x + 67} y={y + 25} textAnchor="middle" fill="#9a8098">{text}</text>
  </>
);

const Cross = ({ x, y }: { x: number; y: number }) => (
  <path
    transform={`translate(${x} ${y})`}
    d="M-5 -3l2-2 3 2 3-2 2 2-2 3 2 3-2 2-3-2-3 2-2-2 2-3z"
    fill="#ffa020" stroke="#c87808"
  />
);

const UP = 'M-2.500 13h5v-7h3l-5.500-6-5.500 6h3z';
const DOWN = 'M-2.500 0h5v6h3l-5.500 7-5.500-7h3z';

const PricePlot = () => (
  <div className={`${frame} bg-linear-to-b from-[#ededff] to-[#ccccff]`}>
    <Pane x={4} y={432}>
      <defs>
        <linearGradient id="green" x2="0" y2="1">
          <stop stopColor="#caffd2" stopOpacity=".6" />
          <stop offset="1" stopColor="#caffd2" stopOpacity=".15" />
        </linearGradient>
        <linearGradient id="pink" x2="0" y2="1">
          <stop stopColor="#ffbdc2" stopOpacity=".15" />
          <stop offset="1" stopColor="#ffbdc2" stopOpacity=".35" />
        </linearGradient>
      </defs>
      <rect x="5" y="432" width="839" height="520" fill="#3a3a2a" opacity=".16" />
      <rect x="5" y="598" width="430" height="148" fill="url(#pink)" />
      <rect x="5" y="746" width="435" height="206" fill="url(#green)" />
      <rect x="442" y="649" width="402" height="56" fill="#ffbdd2" opacity=".28" />
      <rect x="443" y="705" width="401" height="223" fill="#caffd2" opacity=".58" />
      <rect x="443" y="928" width="401" height="24" fill="#ffbdc8" opacity=".6" />
      {BANDS.map(([x, w]) => <rect key={x} x={x} y="432" width={w} height="520" opacity=".07" />)}

      <g fill="none">
        <path d="M5 598.500H435.500V740M5 672.500H435.500L438.500 780" stroke="#000" strokeDasharray="4 3" />
        <path d="M4 819.500H436M4 893.500H436" stroke="#000" />
        <path d="M442.500 700V649.500H800M442.500 677.500H793" stroke="#000" strokeDasharray="5 4" />
        <path d="M800 649.500h44M793 677.500h51" stroke="#000" />
        {EIGHTHS.slice(2).map(([t, y]) => <path key={t} d={`M443 ${y}.5H844`} stroke="#000" />)}
        {SIXTEENTHS.map(([t, y, x]) => (
          <path key={t} d={`M${x} ${y}.5H843`} stroke={t === '9/16' || t === '7/16' ? '#600020' : '#a83a60'} />
        ))}
        <path d="M443 802.500h66M443 830.500h66" stroke="#000" />
      </g>

      {CANDLES.map(([high, top, bottom, low, rising], i) => (
        <g key={i} stroke="#000">
          <path d={`M${toX(i)} ${toY(high)}V${toY(low)}`} />
          <rect
            x={toX(i) - 1}
            y={toY(top) + 0.5}
            width="2"
            height={Math.max(1, toY(bottom) - toY(top) - 1)}
            fill={rising ? '#1478e6' : '#e02ab4'}
          />
        </g>
      ))}

      <g fill="none">
        <path d="M4 746H435L438 850L439 900L441 740V705H844" stroke="#009900" strokeWidth="4" />
        <path d="M439 946V900L443 820V733M440 946L442 850" stroke="#000" strokeWidth="2" />
        <path d="M438 946L442 816H844" stroke="#993300" strokeWidth="4" />
        <path d="M441 946L443 928H844" stroke="#ff3399" strokeWidth="4" />
      </g>

      <g fontSize="15" fontWeight="bold" textAnchor="middle">
        {EIGHTHS.map(([t, y]) => <text key={t} x="470" y={y + 5}>{t}</text>)}
      </g>
      <g fontSize="15" fontStyle="italic" textAnchor="middle">
        {SIXTEENTHS.map(([t, y]) => (
          <text key={t} x="490" y={y + 5} fill={t === '+3/16' || t === '+1/16' ? '#222' : '#c03c08'}>{t}</text>
        ))}
      </g>
      <g fontSize="20" fontWeight="bold">
        <text x="657" y="663">OVERBOUGHT</text>
        <text x="779" y="705" fill="#30c8f8">PivotHigh</text>
        <text x="780" y="816" fill="#888">Midpoint</text>
        <text x="781" y="928" fill="#f850a8">PivotLow</text>
      </g>

      <PriceTag x={200} y={431} text="1@13.042,5" />
      <PriceTag x={754} y={431} text="1@13.276,0" />
      <PriceTag x={131} y={913} buy text="1@13.028,3" />
      <PriceTag x={562} y={913} buy text="1@13.156,8" />

      {SELL_MARKS.map(([x, y]) => (
        <path key={x} transform={`translate(${x} ${y})`} d={DOWN} fill="#ff1a44" stroke="#a00010" />
      ))}
      {BUY_MARKS.map(([x, y]) => (
        <path key={x} transform={`translate(${x} ${y})`} d={UP} fill="#2a0ca8" stroke="#100060" />
      ))}
      <path transform="translate(197 889)" d={UP} fill="#66a8ff" stroke="#2060c8" />
      <path transform="translate(628 720)" d={UP} fill="#66a8ff" stroke="#2060c8" />
      <Cross x={266} y={819} />
      <Cross x={820} y={486} />

      <g fontSize="11" fill="#9a8098">
        <text x="7" y="942">© IT-Finance.com</text>
        <text x="100" y="942" fontStyle="italic">Data is indicatief</text>
      </g>
    </Pane>
  </div>
);

const PriceAxis = () => (
  <Pane x={1810} y={431}>
    <BoxGradient />
    <defs>
      <linearGradient id="last" x2="0" y2="1">
        <stop stopColor="#ffe428" />
        <stop offset="1" stopColor="#f0b800" />
      </linearGradient>
      <linearGradient id="delay" x2="0" y2="1">
        <stop stopColor="#ffb8b8" />
        <stop offset="1" stopColor="#f48a8a" />
      </linearGradient>
    </defs>
    <Tick y={479} text="13.300" />
    <Tick y={549} text="13.250" />
    <Tick y={619} text="13.200" />
    {[494, 498, 689, 759, 829, 899].map((y) => <Tick key={y} y={y} />)}
    <path d="M1810 705.500h4" stroke="#0a0" />
    <path d="M1810 816.500h4" stroke="#a03c00" />
    <path d="M1810 928.500h4" stroke="#f39" />
    <PriceBox y={448} w={120} text="13.289,4" color="#9a8098" />
    <rect x="1814.5" y="497.500" width="120" height="32" fill="url(#last)" stroke="#aaa" />
    <text x="1820" y="521">13.287,0</text>
    <rect x="1814" y="480" width="29" height="31" fill="url(#delay)" />
    <text x="1817" y="503">1s</text>
    {LEVELS.map(([text, y, color]) => <PriceBox key={text} y={y} w={95} text={text} color={color} />)}
  </Pane>
);

const TimeAxis = () => (
  <footer className="h-9 border-b border-[#888] bg-black">
    <Pane x={4} y={946}>
      {TIMES.map(([text, x]) => (
        <g key={x}>
          <path d={`M${x}.5 945v4`} stroke="#aaa" />
          <text x={x} y="973" textAnchor="middle" fill="#999">{text}</text>
        </g>
      ))}
    </Pane>
  </footer>
);

/* ---------- report window ---------- */

const TABS = [
  { label: 'Overzicht', className: 'w-[122px]' },
  { label: 'Statistieken gesloten posities', className: 'w-[327px]' },
  { label: 'Orderlijst', className: 'w-[116px]', active: true },
  { label: 'Lijst gesloten posities', className: 'w-[248px]' },
];

const cell = 'overflow-hidden whitespace-nowrap border-b border-r border-[#c8c8c8] p-0 px-px';

const OrderTable = () => (
  <table className="w-full table-fixed border-collapse border border-[#aaa]">
    <colgroup>
      <col className="w-[289px]" />
      <col />
      <col className="w-[124px]" />
      <col className="w-[69px]" />
      <col className="w-[127px]" />
      <col className="w-[10px]" />
    </colgroup>
    <thead className="bg-linear-to-b from-[#868686] to-[#757575] text-white">
      <tr className="h-[33px]">
        {['Datum', 'Type', 'Koers', 'Aant', 'Huid. waa…', '.'].map((name, i) => (
          <th key={name} scope="col" className="overflow-hidden p-0 font-normal">
            <div className={`flex h-[18px] items-center justify-center whitespace-nowrap ${i < 5 ? 'border-r border-white' : ''}`}>
              {i === 0 && (
                <svg width="14" height="18" viewBox="0 0 14 18" className="mr-2" fill="none" stroke="#fff" strokeWidth="2">
                  <path d="M7 1L1 8h3v9h6V8h3z" />
                </svg>
              )}
              {name}
            </div>
          </th>
        ))}
      </tr>
    </thead>
    <tbody>
      {ORDERS.map((o, i) => (
        <tr key={o.date} className={`h-[47px] text-right ${i % 2 ? 'bg-[#f0f0f0]' : 'bg-[#e1e1e1]'} ${o.buy ? 'text-[#007a00]' : 'text-[#a00000]'}`}>
          <td className={`${cell} text-black`}>{o.date}</td>
          <td className={`${cell} text-left`}>{o.type}</td>
          <td className={cell}>{o.price}</td>
          <td className={cell}>{o.qty}</td>
          <td className={cell}>{o.value}</td>
          <td className={cell}>.</td>
        </tr>
      ))}
    </tbody>
  </table>
);

const ReportWindow = () => (
  <div role="dialog" aria-label="Gedetailleerd Rapport" className="absolute left-[908px] top-7 w-[845px] border border-[#aaa] bg-[#ebebeb] px-[3px] pb-1">
    <div className="flex h-[39px] items-center border-b border-[#aaa] bg-linear-to-b from-white to-[#ebebeb]">
      <CandleLogo />
      <div className="ml-[3px] grid flex-1 grid-cols-[232px_139px_251px_1fr] whitespace-nowrap leading-[25px]">
        <span className="border-r border-[#bbb]">Gedetailleerd Rapport</span>
        <span className="border-r border-[#bbb] pl-[6px]">ProBacktest</span>
        <span className="border-r border-[#bbb] pl-[6px]">TripleFunctionIndicator</span>
        <span className="pl-[6px]">Duitsland</span>
      </div>
      <div className="flex gap-[6px] pr-[3px]">
        <button aria-label="Minimaliseren"><svg width="18" height="18"><path d="M1 15h16" stroke="#b0b0b0" strokeWidth="4" /></svg></button>
        <button aria-label="Maximaliseren">
          <svg width="18" height="18" fill="none" stroke="#b0b0b0" strokeWidth="2"><path d="M1 2h16v15H1zM1 4h16" /></svg>
        </button>
        <button aria-label="Sluiten"><svg width="18" height="18" stroke="#aaa" strokeWidth="4"><path d="M2 2l14 14M16 2L2 16" /></svg></button>
      </div>
    </div>
    <div className="flex h-[80px] items-center whitespace-nowrap border-b border-[#aaa] bg-linear-to-b from-white to-[#ebebeb] leading-[29px]">
      <span className="w-[56px]">Dui…</span>
      <p className="flex-1 text-center">TripleFunctionIndicator<br />10 minuten</p>
      <button className="h-[39px] w-[229px] rounded-sm border border-[#aaa] bg-linear-to-b from-white to-[#ebebeb]">Wijzig ProBacktest</button>
      <dl className="ml-[6px] grid w-[300px] grid-cols-[auto_1fr] pr-1">
        <dt>Start:</dt><dd className="text-right">3-feb-2020 9:00:00</dd>
        <dt>Huidig :</dt><dd className="text-right">4-feb-2020 18:30:00</dd>
      </dl>
    </div>
    <div className="border-b border-[#aaa] px-2 pb-[11px] pt-[11px]">
      <div role="tablist" className="flex items-end">
        {TABS.map((tab) => (
          <button
            key={tab.label}
            role="tab"
            aria-selected={!!tab.active}
            className={`whitespace-nowrap rounded-t-sm border border-b-0 ${tab.className} ${
              tab.active
                ? 'h-[35px] border-[#2c5a1c] bg-linear-to-b from-[#4f8038] to-[#3d6d28] text-white'
                : 'h-[33px] border-[#aaa] bg-linear-to-b from-white to-[#ebebeb]'
            }`}
          >
            {tab.label}
          </button>
        ))}
      </div>
      <OrderTable />
    </div>
    <p className="bg-linear-to-b from-[#ebebeb] to-white px-[3px] py-px leading-[29px]">
      Deze statistieken hebben betrekking op gegevens uit het verleden. In het
      <br />
      verleden behaalde resultaten bieden geen garantie voor de toekomst.
    </p>
  </div>
);

const App = () => (
  <div className="flex min-h-screen bg-black font-['Liberation_Sans',Arial,sans-serif] text-[23px] leading-[26px] text-black">
    <div className="w-1 shrink-0 border-x border-[#aaa] bg-[#f2f2f2]" />
    <div className="flex min-w-0 flex-1 flex-col">
      <TitleBar />
      <StatusBar />
      <Toolbar />
      <main className="flex flex-1 flex-col gap-[2px] bg-black">
        <Row
          className="h-[215px]"
          plot={<EquityPlot />}
          axis={
            <Pane x={1810} y={162}>
              <BoxGradient />
              <path d="M1810 173.500h4" stroke="#ffa020" />
              <PriceBox y={163} w={75} h={30} text="10.133" color="#ffa020" />
              <Tick y={212} text="10.100" />
              <Tick y={270} text="10.050" />
              <Tick y={329} text="10.000" />
            </Pane>
          }
        />
        <Row
          className="h-[50px]"
          plot={<PositionPlot />}
          axis={
            <Pane x={1810} y={379}>
              <Tick y={382} />
              <text x="1817" y="402" fill="#999">1</text>
              <PriceBox y={397} w={16} h={30} text="0" color="#5b98f5" />
            </Pane>
          }
        />
        <Row className="h-[515px] flex-auto" plot={<><PricePlot /><ReportWindow /></>} axis={<PriceAxis />} />
      </main>
      <TimeAxis />
    </div>
  </div>
);

export default App;
